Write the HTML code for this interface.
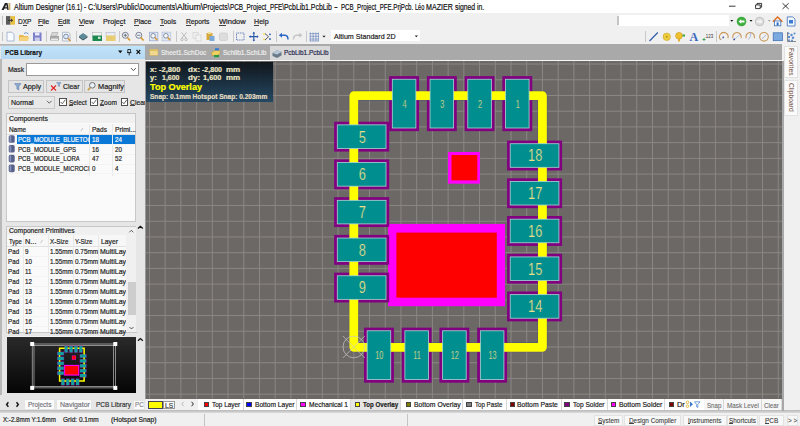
<!DOCTYPE html>
<html><head><meta charset="utf-8">
<style>
*{margin:0;padding:0;box-sizing:border-box}
html,body{width:800px;height:426px;overflow:hidden;background:#f0f0f0;font-family:"Liberation Sans",sans-serif;color:#1a1a1a}
.a{position:absolute}
.t{position:absolute;white-space:pre;transform-origin:0 0;line-height:1;-webkit-text-stroke:0.2px currentColor}
svg{overflow:visible}
</style></head><body>
<div class="a" style="left:0.00px;top:0.00px;width:800.00px;height:13.00px;background:#fff"></div>
<div class="t" style="left:13.90px;top:3.00px;font-size:8.4px;transform:scaleX(0.847);color:#111;">Altium Designer </div>
<div class="t" style="left:66.10px;top:3.00px;font-size:8.4px;transform:scaleX(0.745);color:#111;">(16.1) - </div>
<div class="t" style="left:88.00px;top:3.00px;font-size:8.4px;transform:scaleX(0.851);color:#111;">C:\Users\</div>
<div class="t" style="left:117.80px;top:3.00px;font-size:8.4px;transform:scaleX(0.869);color:#111;">Public\</div>
<div class="t" style="left:139.70px;top:3.00px;font-size:8.4px;transform:scaleX(0.832);color:#111;">Documents\</div>
<div class="t" style="left:177.00px;top:3.00px;font-size:8.4px;transform:scaleX(1.021);color:#111;">Altium\</div>
<div class="t" style="left:203.20px;top:3.00px;font-size:8.4px;transform:scaleX(0.814);color:#111;">Projects\</div>
<div class="t" style="left:229.80px;top:3.00px;font-size:8.4px;transform:scaleX(0.759);color:#111;">PCB_Project_PFE\</div>
<div class="t" style="left:284.00px;top:3.00px;font-size:8.4px;transform:scaleX(0.824);color:#111;">PcbLib1.PcbLib </div>
<div class="t" style="left:334.00px;top:3.00px;font-size:8.4px;transform:scaleX(1.345);color:#111;">- </div>
<div class="t" style="left:340.90px;top:3.00px;font-size:8.4px;transform:scaleX(0.735);color:#111;">PCB_Project_PFE.PrjPcb. </div>
<div class="t" style="left:415.00px;top:3.00px;font-size:8.4px;transform:scaleX(0.661);color:#111;">Léo </div>
<div class="t" style="left:425.80px;top:3.00px;font-size:8.4px;transform:scaleX(0.848);color:#111;">MAZIER </div>
<div class="t" style="left:454.70px;top:3.00px;font-size:8.4px;transform:scaleX(0.815);color:#111;">signed in.</div>
<svg class="a" style="left:0;top:0" width="800" height="426" viewBox="0 0 800 426"><path d="M1.5 10L5 3H7.5L9 10H7.4L7 8.5H4.6L3.8 10Z" fill="#222"/><path d="M5 7.3H6.8L6.3 4.6Z" fill="#fff"/><rect x="8.4" y="3" width="2" height="7" fill="#c8b078"/>
<path d="M729 6.2H735.5" stroke="#222" stroke-width="0.9"/>
<path d="M755.6 4.9H760.2V8.6H755.6Z M757 4.9V3.4H761.6V7.2H760.2" stroke="#222" stroke-width="0.9" fill="none"/>
<path d="M782.5 3.2L788.7 9M788.7 3.2L782.5 9" stroke="#222" stroke-width="0.9"/></svg>
<div class="a" style="left:0.00px;top:13.00px;width:800.00px;height:30.50px;background:#f0f0f0"></div>
<div class="a" style="left:1.90px;top:16.10px;width:1.50px;height:9.00px;background:#c4c4c4"></div>
<div class="a" style="left:1.90px;top:31.50px;width:1.50px;height:9.50px;background:#c4c4c4"></div>
<svg class="a" style="left:0;top:0" width="800" height="426" viewBox="0 0 800 426"><rect x="6" y="16.1" width="4.5" height="8.6" fill="#5a5a5a"/><rect x="10.5" y="16.1" width="4.5" height="8.6" fill="#e8c040"/><path d="M8 20.4H12.5M11 19L12.6 20.4L11 21.8" stroke="#333" stroke-width="1" fill="none"/></svg>
<div class="t" style="left:18.00px;top:18.00px;font-size:7.8px;transform:scaleX(0.841);color:#1a1a1a;">DXP</div>
<div class="a" style="left:22.74px;top:24.60px;width:4.38px;height:0.70px;background:#444"></div>
<div class="t" style="left:38.30px;top:18.00px;font-size:7.8px;transform:scaleX(0.893);color:#1a1a1a;">File</div>
<div class="a" style="left:38.30px;top:24.60px;width:4.25px;height:0.70px;background:#444"></div>
<div class="t" style="left:58.00px;top:18.00px;font-size:7.8px;transform:scaleX(0.886);color:#1a1a1a;">Edit</div>
<div class="a" style="left:58.00px;top:24.60px;width:4.61px;height:0.70px;background:#444"></div>
<div class="t" style="left:79.00px;top:18.00px;font-size:7.8px;transform:scaleX(0.888);color:#1a1a1a;">View</div>
<div class="a" style="left:79.00px;top:24.60px;width:4.62px;height:0.70px;background:#444"></div>
<div class="t" style="left:103.00px;top:18.00px;font-size:7.8px;transform:scaleX(0.924);color:#1a1a1a;">Project</div>
<div class="a" style="left:119.83px;top:24.60px;width:3.60px;height:0.70px;background:#444"></div>
<div class="t" style="left:134.00px;top:18.00px;font-size:7.8px;transform:scaleX(0.893);color:#1a1a1a;">Place</div>
<div class="a" style="left:134.00px;top:24.60px;width:4.64px;height:0.70px;background:#444"></div>
<div class="t" style="left:160.00px;top:18.00px;font-size:7.8px;transform:scaleX(0.887);color:#1a1a1a;">Tools</div>
<div class="a" style="left:160.00px;top:24.60px;width:4.23px;height:0.70px;background:#444"></div>
<div class="t" style="left:186.00px;top:18.00px;font-size:7.8px;transform:scaleX(0.857);color:#1a1a1a;">Reports</div>
<div class="a" style="left:186.00px;top:24.60px;width:4.83px;height:0.70px;background:#444"></div>
<div class="t" style="left:218.70px;top:18.00px;font-size:7.8px;transform:scaleX(0.964);color:#1a1a1a;">Window</div>
<div class="a" style="left:218.70px;top:24.60px;width:7.10px;height:0.70px;background:#444"></div>
<div class="t" style="left:253.80px;top:18.00px;font-size:7.8px;transform:scaleX(0.912);color:#1a1a1a;">Help</div>
<div class="a" style="left:253.80px;top:24.60px;width:5.14px;height:0.70px;background:#444"></div>
<div class="a" style="left:617.20px;top:15.80px;width:1.50px;height:9.40px;background:#c4c4c4"></div>
<div class="a" style="left:619.30px;top:14.70px;width:109.70px;height:11.10px;background:#fff"></div>
<svg class="a" style="left:0;top:0" width="800" height="426" viewBox="0 0 800 426"><path d="M730.3 20H733.3L731.8 21.8Z" fill="#111"/>
<circle cx="741.5" cy="21.5" r="4.8" fill="#3fae3f"/><path d="M738.6 21.5L741.2 19.2V20.6H744.5V22.4H741.2V23.8Z" fill="#fff"/>
<path d="M749.5 20H752.5L751 21.8Z" fill="#111"/>
<circle cx="759.6" cy="21.5" r="4.8" fill="#c8c8c8"/><circle cx="759.6" cy="21.5" r="3.6" fill="#dcdcdc"/><path d="M762.4 21.5L759.8 19.2V20.6H756.6V22.4H759.8V23.8Z" fill="#f4f4f4"/>
<path d="M767.8 20H770.6L769.2 21.6Z" fill="#999"/>
<path d="M772.9 21.8L777.6 17L782.4 21.8" stroke="#e06a20" stroke-width="1.4" fill="none"/><rect x="774.4" y="21" width="6.4" height="4.8" fill="#fff" stroke="#3a70b8" stroke-width="0.8"/><rect x="776.6" y="22.4" width="2" height="3" fill="#2a68c8"/>
<path d="M787.3 16.9H792.7L795 19.2V26H787.3Z" fill="#f4f8ff" stroke="#3a6cc0" stroke-width="0.8"/><rect x="789" y="20" width="4" height="3.5" fill="#3a7ad0"/></svg>
<div class="a" style="left:46.00px;top:31.00px;width:0.90px;height:11.00px;background:#c8c8c8"></div>
<div class="a" style="left:76.30px;top:31.00px;width:0.90px;height:11.00px;background:#c8c8c8"></div>
<div class="a" style="left:119.00px;top:31.00px;width:0.90px;height:11.00px;background:#c8c8c8"></div>
<div class="a" style="left:175.60px;top:31.00px;width:0.90px;height:11.00px;background:#c8c8c8"></div>
<div class="a" style="left:232.60px;top:31.00px;width:0.90px;height:11.00px;background:#c8c8c8"></div>
<div class="a" style="left:275.60px;top:31.00px;width:0.90px;height:11.00px;background:#c8c8c8"></div>
<div class="a" style="left:305.60px;top:31.00px;width:0.90px;height:11.00px;background:#c8c8c8"></div>
<div class="a" style="left:645.35px;top:31.00px;width:0.90px;height:11.00px;background:#c8c8c8"></div>
<div class="a" style="left:715.60px;top:31.00px;width:0.90px;height:11.00px;background:#c8c8c8"></div>
<svg class="a" style="left:0;top:0" width="800" height="426" viewBox="0 0 800 426"><path d="M7 32.2H12L14 34.2V41H7Z" fill="#f8fbff" stroke="#8aa0c0" stroke-width="0.7"/><path d="M19 35H23L24 36H28V40.8H19Z" fill="#e8b850"/><path d="M20 37H29.5L28 40.8H19Z" fill="#f6d27a"/><path d="M24 33.5Q26.5 31.5 28.5 34" stroke="#4a80c0" stroke-width="0.8" fill="none"/><rect x="33" y="32.5" width="8.5" height="8.5" fill="#7a7ec8"/><rect x="35" y="32.5" width="4.5" height="3" fill="#e8e8f8"/><rect x="34.8" y="37.5" width="5" height="3.5" fill="#c8cce8"/><path d="M50 36H59V40.5H50Z" fill="#a8a8a8"/><path d="M52 32.5H58L56.5 36H51Z" fill="#d8d8d8" stroke="#999" stroke-width="0.5"/><rect x="51" y="38.5" width="7" height="1.5" fill="#e8e8e8"/><path d="M62.5 32.3H68.5L70 34V41H62.5Z" fill="#f4f6fa" stroke="#8a98b0" stroke-width="0.6"/><circle cx="66" cy="36.5" r="2.4" fill="#dbe8f8" stroke="#6a7a98" stroke-width="0.8"/><path d="M67.8 38.3L70.5 41" stroke="#d09030" stroke-width="1.3"/><path d="M79 36L83 33L87.5 36L83 39Z" fill="#5a8a98"/><path d="M79 36V37.6L83 40.6L87.5 37.6V36L83 39Z" fill="#3a5a68"/><rect x="92.5" y="32.5" width="9" height="5" fill="#f4f4f4" stroke="#aaa" stroke-width="0.5"/><rect x="92.5" y="35.5" width="9.5" height="5.5" fill="#1e8a50"/><rect x="98" y="36.8" width="2.5" height="2" fill="#e0f0e0"/><rect x="106" y="32.5" width="9" height="5" fill="#e8ecf4" stroke="#aab" stroke-width="0.5"/><rect x="106" y="35.5" width="9.5" height="5.5" fill="#e8cc70"/><circle cx="125.3" cy="35.3" r="3" fill="#eaf2fb" stroke="#667" stroke-width="0.8"/><path d="M127.3 37.5L130.1 40.5" stroke="#d8962a" stroke-width="1.6"/><path d="M123.7 35.3H126.9" stroke="#333" stroke-width="0.6"/><path d="M125.3 33.7V36.9" stroke="#333" stroke-width="0.6"/><circle cx="138.8" cy="35.3" r="3" fill="#eaf2fb" stroke="#667" stroke-width="0.8"/><path d="M140.8 37.5L143.6 40.5" stroke="#d8962a" stroke-width="1.6"/><path d="M137.2 35.3H140.4" stroke="#333" stroke-width="0.6"/><rect x="149.29999999999998" y="32.2" width="8.6" height="8.6" fill="#dde8f6" stroke="#8a9ac8" stroke-width="0.6" /><circle cx="153.1" cy="35.8" r="2.3" fill="#f4f8fc" stroke="#667" stroke-width="0.7"/><path d="M154.79999999999998 37.5L157.2 40" stroke="#d8962a" stroke-width="1.4"/><rect x="162.1" y="32.2" width="8.6" height="8.6" fill="#dde8f6" stroke="#8a9ac8" stroke-width="0.6" stroke-dasharray="1 0.6"/><circle cx="165.9" cy="35.8" r="2.3" fill="#f4f8fc" stroke="#667" stroke-width="0.7"/><path d="M167.6 37.5L170.0 40" stroke="#d8962a" stroke-width="1.4"/><path d="M181.5 32.5L186.5 38.5M186.5 32.5L181.5 38.5" stroke="#aaa" stroke-width="0.8"/><circle cx="182" cy="39.5" r="1.2" fill="none" stroke="#aaa" stroke-width="0.7"/><circle cx="186" cy="39.5" r="1.2" fill="none" stroke="#aaa" stroke-width="0.7"/><rect x="193" y="32.5" width="5" height="6" fill="#eee" stroke="#ccc" stroke-width="0.6"/><rect x="196" y="35" width="5" height="6" fill="#f2f2f2" stroke="#ccc" stroke-width="0.6"/><rect x="206.5" y="33" width="6" height="7" fill="#d8a838"/><rect x="208" y="32" width="3" height="2" fill="#f0e0a0"/><rect x="209.5" y="36" width="5" height="5" fill="#7aa8d8"/><rect x="219.5" y="33" width="8" height="7.5" rx="1.5" fill="#ddd" stroke="#c8c8c8" stroke-width="0.6"/><rect x="236.5" y="33" width="7.5" height="7" fill="none" stroke="#3a5aa8" stroke-width="0.8" stroke-dasharray="1 0.7"/><path d="M253.8 32.3V41M249.5 36.6H258" stroke="#2a58a8" stroke-width="1.1"/><path d="M253.8 31.8L252.5 33.4H255.1ZM253.8 41.4L252.5 39.8H255.1ZM249 36.6L250.6 35.3V37.9ZM258.6 36.6L257 35.3V37.9Z" fill="#2a58a8"/><circle cx="264" cy="34" r="1" fill="#f0e060"/><circle cx="264" cy="39.5" r="1" fill="#f0e060"/><path d="M265 33.5L268.5 36.7L265 40" stroke="#333" stroke-width="0.8" fill="none"/><circle cx="270" cy="34.3" r="0.9" fill="#2a58a8"/><circle cx="270" cy="39" r="0.9" fill="#2a58a8"/><path d="M279.7 35.3H285Q288 35.5 288 39.5" stroke="#2a68c8" stroke-width="1.5" fill="none"/><path d="M279 35.3L282 32.8V37.8Z" fill="#2a68c8"/><path d="M301.5 35.3H296.5Q293.5 35.5 293.5 39.5" stroke="#c4c4c4" stroke-width="1.4" fill="none"/><path d="M302.3 35.3L299.3 32.8V37.8Z" fill="#c4c4c4"/><g stroke="#5a78b8" stroke-width="0.6"><path d="M310.3 32.5V41M313.1 32.5V41M315.9 32.5V41M318.4 32.5V41M309.5 33.6H319M309.5 36.3H319M309.5 39H319M309.5 41H319"/></g><path d="M322.5 35.8H325.5L324 37.6Z" fill="#111"/></svg>
<div class="a" style="left:331.00px;top:30.00px;width:89.00px;height:11.20px;background:#fff"></div>
<div class="t" style="left:333.50px;top:33.00px;font-size:7.8px;transform:scaleX(0.913);color:#222;">Altium Standard 2D</div>
<svg class="a" style="left:0;top:0" width="800" height="426" viewBox="0 0 800 426"><path d="M414.8 35.5H417.8L416.3 37.3Z" fill="#111"/></svg>
<svg class="a" style="left:0;top:0" width="800" height="426" viewBox="0 0 800 426"><path d="M649.5 41L657.8 32.5" stroke="#2a58a8" stroke-width="1.1"/><circle cx="666.75" cy="36.8" r="3.7" fill="#f0d040" stroke="#c8a020" stroke-width="0.6"/><circle cx="666.75" cy="36.8" r="1.2" fill="#c8a020"/><circle cx="679" cy="35.8" r="3.4" fill="#f0c030" stroke="#c89a20" stroke-width="0.6"/><rect x="678" y="38.5" width="2" height="3" fill="#e0b030"/><rect x="682.5" y="34.5" width="2.5" height="2" fill="#3aa040"/><text x="693.75" y="41" font-family="Liberation Serif" font-weight="bold" font-size="12" fill="#3a68c0" text-anchor="middle">A</text><text x="709" y="38" font-family="Liberation Sans" font-size="4.5" fill="#333" text-anchor="middle">.123</text><path d="M702.5 39.5H705.5M704 38V41" stroke="#2a9a40" stroke-width="0.8"/><path d="M720.76 39.84A4.3 4.3 0 1 1 727.84 38.27" stroke="#c89858" stroke-width="1.1" fill="none"/><circle cx="723.3" cy="37.3" r="0.9" fill="#2a4a98"/><path d="M723.3 37.3L720.6 40" stroke="#8aa0d8" stroke-width="0.5"/><path d="M732.96 38.27A4.3 4.3 0 1 1 741.04 38.27" stroke="#c89858" stroke-width="1.1" fill="none"/><path d="M740 34.5L734.2 39.4" stroke="#8aa0d8" stroke-width="0.6"/><circle cx="734.2" cy="39.4" r="0.9" fill="#2a4a98"/><path d="M746.16 38.27A4.3 4.3 0 1 1 754.24 38.27" stroke="#c89858" stroke-width="1.1" fill="none"/><path d="M750.6 32.5V36L748.5 39.5" stroke="#8aa0d8" stroke-width="0.7" fill="none"/><circle cx="764" cy="36.8" r="4.3" fill="none" stroke="#c89858" stroke-width="1.1"/><path d="M762 39L766 34.8" stroke="#8aa0d8" stroke-width="0.7"/><rect x="773.2" y="32.8" width="9.2" height="7.9" fill="#7aaae0" stroke="#3a68b0" stroke-width="0.7"/><g fill="#5a8ad0"><circle cx="788.5" cy="33.5" r="1"/><circle cx="791.5" cy="35" r="1.2"/><circle cx="794.5" cy="33.5" r="1"/><circle cx="789" cy="37" r="1.2"/><circle cx="793" cy="37.8" r="1.2"/><circle cx="789" cy="40.2" r="1"/><circle cx="792" cy="40.5" r="1"/></g><path d="M787.5 32V41.5H796" stroke="#444" stroke-width="0.6" fill="none"/></svg>
<div class="a" style="left:0.00px;top:43.50px;width:145.00px;height:367.00px;background:#e6e6e6"></div>
<div class="a" style="left:0.00px;top:43.50px;width:145.00px;height:2.20px;background:linear-gradient(#acacac,#cacaca)"></div>
<div class="a" style="left:1.00px;top:45.70px;width:144.00px;height:13.30px;background:linear-gradient(#c0e4fa,#b6d8f2)"></div>
<div class="t" style="left:4.70px;top:49.00px;font-size:7.8px;transform:scaleX(0.820);color:#111;font-weight:bold;">PCB Library</div>
<svg class="a" style="left:0;top:0" width="800" height="426" viewBox="0 0 800 426"><path d="M118 50.6H122.5L120.25 53.2Z" fill="#111"/>
<path d="M127.8 49.5H130.6V52.6H127.8Z M127 52.6H131.4 M129.2 52.6V55.4" stroke="#222" stroke-width="0.9" fill="none"/>
<path d="M136.5 50L140.2 53.8M140.2 50L136.5 53.8" stroke="#111" stroke-width="1.1"/></svg>
<div class="a" style="left:0.00px;top:59.00px;width:2.00px;height:336.00px;background:#b8b8b8"></div>
<div class="t" style="left:7.60px;top:66.00px;font-size:7.8px;transform:scaleX(0.864);color:#222;">Mask</div>
<div class="a" style="left:25.50px;top:63.30px;width:113.50px;height:12.30px;background:#fff;border:1px solid #9a9a9a"></div>
<svg class="a" style="left:0;top:0" width="800" height="426" viewBox="0 0 800 426"><path d="M131 68.1L133.4 70.6L135.8 68.1" stroke="#555" stroke-width="1" fill="none"/></svg>
<div class="a" style="left:8.40px;top:80.00px;width:36.10px;height:13.00px;background:#e4e4e4;border:1px solid #c4c4c4"></div>
<div class="a" style="left:46.00px;top:80.00px;width:36.50px;height:13.00px;background:#e4e4e4;border:1px solid #c4c4c4"></div>
<div class="a" style="left:84.00px;top:80.00px;width:41.00px;height:13.00px;background:#e4e4e4;border:1px solid #c4c4c4"></div>
<div class="t" style="left:23.30px;top:83.00px;font-size:7.8px;transform:scaleX(0.929);color:#222;">Apply</div>
<div class="t" style="left:63.00px;top:83.00px;font-size:7.8px;transform:scaleX(0.881);color:#222;">Clear</div>
<div class="t" style="left:97.50px;top:83.00px;font-size:7.8px;transform:scaleX(0.950);color:#222;">Magnify</div>
<svg class="a" style="left:0;top:0" width="800" height="426" viewBox="0 0 800 426"><path d="M14.5 83.5H21L18.8 86.6V90L16.9 89V86.6Z" fill="#8aa8d0" stroke="#5a78a8" stroke-width="0.5"/>
<path d="M51 85.5L56 90.5M56 85.5L51 90.5" stroke="#e02020" stroke-width="1.1"/><path d="M56.5 82.5H61L59.5 84.6V86.6L58.2 86V84.6Z" fill="#8aa8d0" stroke="#5a78a8" stroke-width="0.4"/>
<circle cx="92.3" cy="85.3" r="2.8" fill="#e8f0f8" stroke="#555" stroke-width="0.8"/><path d="M90.4 87.4L87.8 90.2" stroke="#c89a40" stroke-width="1.5"/></svg>
<div class="a" style="left:8.40px;top:96.00px;width:46.60px;height:12.50px;background:#e8e8e8;border:1px solid #c8c8c8"></div>
<div class="t" style="left:10.80px;top:99.00px;font-size:7.8px;transform:scaleX(0.900);color:#222;">Normal</div>
<svg class="a" style="left:0;top:0" width="800" height="426" viewBox="0 0 800 426"><path d="M47 100.8L49.3 103.2L51.6 100.8" stroke="#555" stroke-width="0.9" fill="none"/></svg>
<div class="a" style="left:59.00px;top:98.40px;width:7.80px;height:7.50px;background:#fff;border:0.9px solid #505050"></div>
<svg class="a" style="left:0;top:0" width="800" height="426" viewBox="0 0 800 426"><path d="M60.6 101.9L62.3 103.8L65.4 99.6" stroke="#444" stroke-width="0.8" fill="none"/></svg>
<div class="t" style="left:68.50px;top:99.00px;font-size:7.8px;transform:scaleX(0.825);color:#222;">Select</div>
<div class="a" style="left:68.50px;top:105.30px;width:4.29px;height:0.70px;background:#444"></div>
<div class="a" style="left:90.00px;top:98.40px;width:7.80px;height:7.50px;background:#fff;border:0.9px solid #505050"></div>
<svg class="a" style="left:0;top:0" width="800" height="426" viewBox="0 0 800 426"><path d="M91.6 101.9L93.3 103.8L96.4 99.6" stroke="#444" stroke-width="0.8" fill="none"/></svg>
<div class="t" style="left:99.50px;top:99.00px;font-size:7.8px;transform:scaleX(0.847);color:#222;">Zoom</div>
<div class="a" style="left:99.50px;top:105.30px;width:4.04px;height:0.70px;background:#444"></div>
<div class="a" style="left:120.60px;top:98.40px;width:7.80px;height:7.50px;background:#fff;border:0.9px solid #505050"></div>
<svg class="a" style="left:0;top:0" width="800" height="426" viewBox="0 0 800 426"><path d="M122.19999999999999 101.9L123.89999999999999 103.8L127.0 99.6" stroke="#444" stroke-width="0.8" fill="none"/></svg>
<div class="t" style="left:130.10px;top:99.00px;font-size:7.8px;transform:scaleX(0.875);color:#222;">Clear</div>
<div class="a" style="left:130.10px;top:105.30px;width:4.93px;height:0.70px;background:#444"></div>
<div class="a" style="left:6.40px;top:113.40px;width:129.60px;height:108.30px;background:#fafafa;border:1px solid #c8c8c8"></div>
<div class="a" style="left:7.40px;top:114.40px;width:127.60px;height:9.10px;background:#f0f0f0"></div>
<div class="a" style="left:7.40px;top:123.50px;width:127.60px;height:0.80px;background:#dcdcdc"></div>
<div class="t" style="left:8.80px;top:115.00px;font-size:7.8px;transform:scaleX(0.880);color:#222;">Components</div>
<div class="a" style="left:7.40px;top:124.30px;width:127.60px;height:9.90px;background:#f7f7f7"></div>
<div class="a" style="left:7.40px;top:133.80px;width:127.60px;height:0.80px;background:#e0e0e0"></div>
<div class="a" style="left:89.40px;top:124.30px;width:0.80px;height:51.70px;background:#e8e8e8"></div>
<div class="a" style="left:111.80px;top:124.30px;width:0.80px;height:51.70px;background:#e8e8e8"></div>
<div class="t" style="left:8.80px;top:126.00px;font-size:7.8px;transform:scaleX(0.821);color:#222;">Name</div>
<div class="t" style="left:91.50px;top:126.00px;font-size:7.8px;transform:scaleX(0.838);color:#222;">Pads</div>
<div class="t" style="left:114.50px;top:126.00px;font-size:7.8px;transform:scaleX(0.861);color:#222;">Primi...</div>
<svg class="a" style="left:0;top:0" width="800" height="426" viewBox="0 0 800 426"><path d="M80.8 131.2L82.8 128" stroke="#999" stroke-width="0.5"/></svg>
<div class="a" style="left:16.90px;top:135.20px;width:118.60px;height:8.60px;background:#0a78d7"></div>
<div class="t" style="left:17.60px;top:136.00px;font-size:7.8px;transform:scaleX(0.780);color:#fff;max-width:92px;overflow:hidden">PCB_MODULE_BLUETOC</div>
<div class="t" style="left:91.50px;top:136.00px;font-size:7.8px;transform:scaleX(0.800);color:#fff;">18</div>
<div class="t" style="left:114.50px;top:136.00px;font-size:7.8px;transform:scaleX(0.800);color:#fff;">24</div>
<div class="a" style="left:7.40px;top:144.00px;width:127.60px;height:0.70px;background:#f3f3f3"></div>
<svg class="a" style="left:0;top:0" width="800" height="426" viewBox="0 0 800 426"><rect x="8.7" y="135.20000000000002" width="6" height="7.6" rx="1.6" fill="#56608a"/><rect x="9.6" y="135.8" width="1.6" height="6.2" fill="#8a94b8"/></svg>
<div class="t" style="left:17.60px;top:146.00px;font-size:7.8px;transform:scaleX(0.780);color:#222;max-width:92px;overflow:hidden">PCB_MODULE_GPS</div>
<div class="t" style="left:91.50px;top:146.00px;font-size:7.8px;transform:scaleX(0.800);color:#222;">16</div>
<div class="t" style="left:114.50px;top:146.00px;font-size:7.8px;transform:scaleX(0.800);color:#222;">20</div>
<div class="a" style="left:7.40px;top:153.80px;width:127.60px;height:0.70px;background:#f3f3f3"></div>
<svg class="a" style="left:0;top:0" width="800" height="426" viewBox="0 0 800 426"><rect x="8.7" y="145.00000000000003" width="6" height="7.6" rx="1.6" fill="#56608a"/><rect x="9.6" y="145.60000000000002" width="1.6" height="6.2" fill="#8a94b8"/></svg>
<div class="t" style="left:17.60px;top:155.00px;font-size:7.8px;transform:scaleX(0.780);color:#222;max-width:92px;overflow:hidden">PCB_MODULE_LORA</div>
<div class="t" style="left:91.50px;top:155.00px;font-size:7.8px;transform:scaleX(0.800);color:#222;">47</div>
<div class="t" style="left:114.50px;top:155.00px;font-size:7.8px;transform:scaleX(0.800);color:#222;">52</div>
<div class="a" style="left:7.40px;top:163.60px;width:127.60px;height:0.70px;background:#f3f3f3"></div>
<svg class="a" style="left:0;top:0" width="800" height="426" viewBox="0 0 800 426"><rect x="8.7" y="154.8" width="6" height="7.6" rx="1.6" fill="#56608a"/><rect x="9.6" y="155.4" width="1.6" height="6.2" fill="#8a94b8"/></svg>
<div class="t" style="left:17.60px;top:165.00px;font-size:7.8px;transform:scaleX(0.780);color:#222;max-width:92px;overflow:hidden">PCB_MODULE_MICROCI</div>
<div class="t" style="left:91.50px;top:165.00px;font-size:7.8px;transform:scaleX(0.800);color:#222;">0</div>
<div class="t" style="left:114.50px;top:165.00px;font-size:7.8px;transform:scaleX(0.800);color:#222;">4</div>
<div class="a" style="left:7.40px;top:173.40px;width:127.60px;height:0.70px;background:#f3f3f3"></div>
<svg class="a" style="left:0;top:0" width="800" height="426" viewBox="0 0 800 426"><rect x="8.7" y="164.60000000000002" width="6" height="7.6" rx="1.6" fill="#56608a"/><rect x="9.6" y="165.20000000000002" width="1.6" height="6.2" fill="#8a94b8"/></svg>
<div class="a" style="left:89.40px;top:134.60px;width:46.10px;height:9.20px;background:#0a78d7"></div>
<div class="a" style="left:89.40px;top:134.60px;width:0.80px;height:9.20px;background:#e0ecf8"></div>
<div class="a" style="left:111.80px;top:134.60px;width:0.80px;height:9.20px;background:#e0ecf8"></div>
<div class="t" style="left:91.50px;top:136.00px;font-size:7.8px;transform:scaleX(0.800);color:#fff;">18</div>
<div class="t" style="left:114.50px;top:136.00px;font-size:7.8px;transform:scaleX(0.800);color:#fff;">24</div>
<div class="a" style="left:6.40px;top:225.70px;width:130.10px;height:107.00px;background:#fafafa;border:1px solid #c8c8c8"></div>
<div class="a" style="left:7.40px;top:226.70px;width:118.60px;height:8.70px;background:#f0f0f0"></div>
<div class="t" style="left:8.80px;top:227.00px;font-size:7.8px;transform:scaleX(0.860);color:#222;">Component Primitives</div>
<div class="a" style="left:7.40px;top:235.40px;width:118.60px;height:10.90px;background:#f7f7f7"></div>
<div class="a" style="left:7.40px;top:245.90px;width:118.60px;height:0.80px;background:#e0e0e0"></div>
<div class="a" style="left:23.00px;top:235.40px;width:0.80px;height:96.60px;background:#e8e8e8"></div>
<div class="a" style="left:48.00px;top:235.40px;width:0.80px;height:96.60px;background:#e8e8e8"></div>
<div class="a" style="left:72.80px;top:235.40px;width:0.80px;height:96.60px;background:#e8e8e8"></div>
<div class="a" style="left:97.80px;top:235.40px;width:0.80px;height:96.60px;background:#e8e8e8"></div>
<div class="t" style="left:8.80px;top:238.00px;font-size:7.8px;transform:scaleX(0.759);color:#222;">Type</div>
<div class="t" style="left:25.00px;top:238.00px;font-size:7.8px;transform:scaleX(0.943);color:#222;">N...</div>
<svg class="a" style="left:0;top:0" width="800" height="426" viewBox="0 0 800 426"><path d="M40.5 243.2L42.5 240" stroke="#999" stroke-width="0.5"/></svg>
<div class="t" style="left:50.00px;top:238.00px;font-size:7.8px;transform:scaleX(0.800);color:#222;">X-Size</div>
<div class="t" style="left:75.00px;top:238.00px;font-size:7.8px;transform:scaleX(0.778);color:#222;">Y-Size</div>
<div class="t" style="left:100.50px;top:238.00px;font-size:7.8px;transform:scaleX(0.866);color:#222;">Layer</div>
<div class="t" style="left:8.20px;top:248.00px;font-size:7.8px;transform:scaleX(0.800);color:#222;">Pad</div>
<div class="t" style="left:24.60px;top:248.00px;font-size:7.8px;transform:scaleX(0.800);color:#222;">9</div>
<div class="t" style="left:50.00px;top:248.00px;font-size:7.8px;transform:scaleX(0.812);color:#222;">1.55mm</div>
<div class="t" style="left:74.70px;top:248.00px;font-size:7.8px;transform:scaleX(0.823);color:#222;">0.75mm</div>
<div class="t" style="left:100.00px;top:248.00px;font-size:7.8px;transform:scaleX(0.896);color:#222;">MultiLay</div>
<div class="a" style="left:7.40px;top:256.30px;width:118.60px;height:0.70px;background:#f3f3f3"></div>
<div class="t" style="left:8.20px;top:258.00px;font-size:7.8px;transform:scaleX(0.800);color:#222;">Pad</div>
<div class="t" style="left:24.60px;top:258.00px;font-size:7.8px;transform:scaleX(0.800);color:#222;">10</div>
<div class="t" style="left:50.00px;top:258.00px;font-size:7.8px;transform:scaleX(0.812);color:#222;">1.55mm</div>
<div class="t" style="left:74.70px;top:258.00px;font-size:7.8px;transform:scaleX(0.823);color:#222;">0.75mm</div>
<div class="t" style="left:100.00px;top:258.00px;font-size:7.8px;transform:scaleX(0.896);color:#222;">MultiLay</div>
<div class="a" style="left:7.40px;top:266.27px;width:118.60px;height:0.70px;background:#f3f3f3"></div>
<div class="t" style="left:8.20px;top:268.00px;font-size:7.8px;transform:scaleX(0.800);color:#222;">Pad</div>
<div class="t" style="left:24.60px;top:268.00px;font-size:7.8px;transform:scaleX(0.800);color:#222;">11</div>
<div class="t" style="left:50.00px;top:268.00px;font-size:7.8px;transform:scaleX(0.812);color:#222;">1.55mm</div>
<div class="t" style="left:74.70px;top:268.00px;font-size:7.8px;transform:scaleX(0.823);color:#222;">0.75mm</div>
<div class="t" style="left:100.00px;top:268.00px;font-size:7.8px;transform:scaleX(0.896);color:#222;">MultiLay</div>
<div class="a" style="left:7.40px;top:276.24px;width:118.60px;height:0.70px;background:#f3f3f3"></div>
<div class="t" style="left:8.20px;top:278.00px;font-size:7.8px;transform:scaleX(0.800);color:#222;">Pad</div>
<div class="t" style="left:24.60px;top:278.00px;font-size:7.8px;transform:scaleX(0.800);color:#222;">12</div>
<div class="t" style="left:50.00px;top:278.00px;font-size:7.8px;transform:scaleX(0.812);color:#222;">1.55mm</div>
<div class="t" style="left:74.70px;top:278.00px;font-size:7.8px;transform:scaleX(0.823);color:#222;">0.75mm</div>
<div class="t" style="left:100.00px;top:278.00px;font-size:7.8px;transform:scaleX(0.896);color:#222;">MultiLay</div>
<div class="a" style="left:7.40px;top:286.21px;width:118.60px;height:0.70px;background:#f3f3f3"></div>
<div class="t" style="left:8.20px;top:288.00px;font-size:7.8px;transform:scaleX(0.800);color:#222;">Pad</div>
<div class="t" style="left:24.60px;top:288.00px;font-size:7.8px;transform:scaleX(0.800);color:#222;">13</div>
<div class="t" style="left:50.00px;top:288.00px;font-size:7.8px;transform:scaleX(0.812);color:#222;">1.55mm</div>
<div class="t" style="left:74.70px;top:288.00px;font-size:7.8px;transform:scaleX(0.823);color:#222;">0.75mm</div>
<div class="t" style="left:100.00px;top:288.00px;font-size:7.8px;transform:scaleX(0.896);color:#222;">MultiLay</div>
<div class="a" style="left:7.40px;top:296.18px;width:118.60px;height:0.70px;background:#f3f3f3"></div>
<div class="t" style="left:8.20px;top:298.00px;font-size:7.8px;transform:scaleX(0.800);color:#222;">Pad</div>
<div class="t" style="left:24.60px;top:298.00px;font-size:7.8px;transform:scaleX(0.800);color:#222;">14</div>
<div class="t" style="left:50.00px;top:298.00px;font-size:7.8px;transform:scaleX(0.812);color:#222;">1.55mm</div>
<div class="t" style="left:74.70px;top:298.00px;font-size:7.8px;transform:scaleX(0.823);color:#222;">0.75mm</div>
<div class="t" style="left:100.00px;top:298.00px;font-size:7.8px;transform:scaleX(0.896);color:#222;">MultiLay</div>
<div class="a" style="left:7.40px;top:306.15px;width:118.60px;height:0.70px;background:#f3f3f3"></div>
<div class="t" style="left:8.20px;top:308.00px;font-size:7.8px;transform:scaleX(0.800);color:#222;">Pad</div>
<div class="t" style="left:24.60px;top:308.00px;font-size:7.8px;transform:scaleX(0.800);color:#222;">15</div>
<div class="t" style="left:50.00px;top:308.00px;font-size:7.8px;transform:scaleX(0.812);color:#222;">1.55mm</div>
<div class="t" style="left:74.70px;top:308.00px;font-size:7.8px;transform:scaleX(0.823);color:#222;">0.75mm</div>
<div class="t" style="left:100.00px;top:308.00px;font-size:7.8px;transform:scaleX(0.896);color:#222;">MultiLay</div>
<div class="a" style="left:7.40px;top:316.12px;width:118.60px;height:0.70px;background:#f3f3f3"></div>
<div class="t" style="left:8.20px;top:318.00px;font-size:7.8px;transform:scaleX(0.800);color:#222;">Pad</div>
<div class="t" style="left:24.60px;top:318.00px;font-size:7.8px;transform:scaleX(0.800);color:#222;">16</div>
<div class="t" style="left:50.00px;top:318.00px;font-size:7.8px;transform:scaleX(0.812);color:#222;">1.55mm</div>
<div class="t" style="left:74.70px;top:318.00px;font-size:7.8px;transform:scaleX(0.823);color:#222;">0.75mm</div>
<div class="t" style="left:100.00px;top:318.00px;font-size:7.8px;transform:scaleX(0.896);color:#222;">MultiLay</div>
<div class="a" style="left:7.40px;top:326.09px;width:118.60px;height:0.70px;background:#f3f3f3"></div>
<div class="t" style="left:8.20px;top:328.00px;font-size:7.8px;transform:scaleX(0.800);color:#222;">Pad</div>
<div class="t" style="left:24.60px;top:328.00px;font-size:7.8px;transform:scaleX(0.800);color:#222;">17</div>
<div class="t" style="left:50.00px;top:328.00px;font-size:7.8px;transform:scaleX(0.812);color:#222;">1.55mm</div>
<div class="t" style="left:74.70px;top:328.00px;font-size:7.8px;transform:scaleX(0.823);color:#222;">0.75mm</div>
<div class="t" style="left:100.00px;top:328.00px;font-size:7.8px;transform:scaleX(0.896);color:#222;">MultiLay</div>
<div class="a" style="left:7.40px;top:336.06px;width:118.60px;height:0.70px;background:#f3f3f3"></div>
<div class="a" style="left:126.00px;top:226.70px;width:9.50px;height:105.30px;background:#f0f0f0"></div>
<div class="a" style="left:127.50px;top:282.30px;width:8.00px;height:32.80px;background:#cdcdcd"></div>
<svg class="a" style="left:0;top:0" width="800" height="426" viewBox="0 0 800 426"><path d="M129.3 232.3L131.3 230.3L133.3 232.3" stroke="#333" stroke-width="0.8" fill="none"/>
<path d="M129.5 327L131.5 329L133.5 327" stroke="#333" stroke-width="0.8" fill="none"/>
<path d="M138 228.5L140.4 226.3L142.8 228.5" stroke="#111" stroke-width="1.3" fill="none"/>
<path d="M138 340.8L140.4 338.6L142.8 340.8" stroke="#111" stroke-width="1.3" fill="none"/></svg>
<div class="a" style="left:126.00px;top:332.00px;width:10.50px;height:0.70px;background:#c8c8c8"></div>
<div class="a" style="left:6.8px;top:337.4px;width:129.5px;height:56.1px;background:linear-gradient(#2a2a2a,#050505)"></div>
<svg class="a" style="left:0;top:0" width="800" height="426" viewBox="0 0 800 426"><g fill="none" stroke="#d8d8d8" stroke-width="0.6"><rect x="32.2" y="344" width="83.1" height="43.9"/><rect x="34" y="345.6" width="79.5" height="40.7"/></g>
<g fill="#fff"><rect x="30.2" y="342" width="4" height="4"/><rect x="113.3" y="342" width="4" height="4"/><rect x="30.2" y="385.9" width="4" height="4"/><rect x="113.3" y="385.9" width="4" height="4"/></g>
<g transform="translate(59.6 380.9) scale(0.13) translate(-353.8 -347)"><rect x="388" y="223.9" width="117" height="82.3" fill="#ff00ff"/><rect x="396.4" y="232.6" width="100.4" height="65.1" fill="#ff0000"/><rect x="448" y="152" width="31.9" height="31.7" fill="#ff00ff"/><rect x="451.5" y="155" width="25.8" height="25.4" fill="#ff0000"/><g fill="#800080"><rect x="502.35" y="76.13" width="29.87" height="55.02"/><rect x="464.63" y="76.13" width="29.87" height="55.02"/><rect x="426.90" y="76.13" width="29.87" height="55.02"/><rect x="389.17" y="76.13" width="29.87" height="55.02"/><rect x="334.15" y="121.72" width="55.02" height="29.87"/><rect x="334.15" y="159.45" width="55.02" height="29.87"/><rect x="334.15" y="197.17" width="55.02" height="29.87"/><rect x="334.15" y="234.90" width="55.02" height="29.87"/><rect x="334.15" y="272.63" width="55.02" height="29.87"/><rect x="364.02" y="327.65" width="29.87" height="55.02"/><rect x="401.75" y="327.65" width="29.87" height="55.02"/><rect x="439.47" y="327.65" width="29.87" height="55.02"/><rect x="477.20" y="327.65" width="29.87" height="55.02"/><rect x="507.07" y="291.49" width="55.02" height="29.87"/><rect x="507.07" y="253.77" width="55.02" height="29.87"/><rect x="507.07" y="216.04" width="55.02" height="29.87"/><rect x="507.07" y="178.31" width="55.02" height="29.87"/><rect x="507.07" y="140.58" width="55.02" height="29.87"/></g><path d="M353.80 347.30V95.68H542.44V347.30Z" stroke="#ffff00" stroke-width="11.5" fill="none"/><g fill="#10a0a0"><rect x="505.50" y="79.27" width="23.58" height="48.73"/><rect x="467.77" y="79.27" width="23.58" height="48.73"/><rect x="430.04" y="79.27" width="23.58" height="48.73"/><rect x="392.31" y="79.27" width="23.58" height="48.73"/><rect x="337.29" y="124.86" width="48.73" height="23.58"/><rect x="337.29" y="162.59" width="48.73" height="23.58"/><rect x="337.29" y="200.32" width="48.73" height="23.58"/><rect x="337.29" y="238.05" width="48.73" height="23.58"/><rect x="337.29" y="275.77" width="48.73" height="23.58"/><rect x="367.16" y="330.79" width="23.58" height="48.73"/><rect x="404.89" y="330.79" width="23.58" height="48.73"/><rect x="442.62" y="330.79" width="23.58" height="48.73"/><rect x="480.35" y="330.79" width="23.58" height="48.73"/><rect x="510.21" y="294.64" width="48.73" height="23.58"/><rect x="510.21" y="256.91" width="48.73" height="23.58"/><rect x="510.21" y="219.18" width="48.73" height="23.58"/><rect x="510.21" y="181.45" width="48.73" height="23.58"/><rect x="510.21" y="143.73" width="48.73" height="23.58"/></g></g></svg>
<div class="a" style="left:0.00px;top:395.00px;width:145.00px;height:15.50px;background:#e6e6e6"></div>
<svg class="a" style="left:0;top:0" width="800" height="426" viewBox="0 0 800 426"><path d="M8.4 402.3L6.6 404.5L8.4 406.7" stroke="#111" stroke-width="1.4" fill="none"/><path d="M16.5 402.3L18.3 404.5L16.5 406.7" stroke="#111" stroke-width="1.4" fill="none"/></svg>
<div class="a" style="left:24.30px;top:399.40px;width:30.40px;height:10.40px;background:#fbfbfb;border:0.5px solid #e4e4e4"></div>
<div class="a" style="left:55.90px;top:399.40px;width:36.00px;height:10.40px;background:#fbfbfb;border:0.5px solid #e4e4e4"></div>
<div class="a" style="left:132.80px;top:399.70px;width:11.90px;height:10.20px;background:#fbfbfb;border:0.5px solid #e4e4e4"></div>
<div class="t" style="left:28.00px;top:401.00px;font-size:7.8px;transform:scaleX(0.830);color:#777780;">Projects</div>
<div class="t" style="left:59.50px;top:401.00px;font-size:7.8px;transform:scaleX(0.896);color:#777780;">Navigator</div>
<div class="t" style="left:96.00px;top:401.00px;font-size:7.8px;transform:scaleX(0.830);color:#333;">PCB Library</div>
<div class="t" style="left:135.00px;top:401.00px;font-size:7.8px;transform:scaleX(0.800);color:#888890;">PC</div>
<div class="a" style="left:145.00px;top:43.50px;width:637.30px;height:16.50px;background:#a9a9a9"></div>
<div class="a" style="left:145.00px;top:60.00px;width:637.50px;height:1.00px;background:#f8f8f8"></div>
<div class="a" style="left:269.90px;top:46.20px;width:60.50px;height:13.80px;background:#d9d9d9"></div>
<svg class="a" style="left:0;top:0" width="800" height="426" viewBox="0 0 800 426"><rect x="149.8" y="49.5" width="8.2" height="6" fill="#f0d890" stroke="#c8a850" stroke-width="0.5"/><rect x="149.8" y="49.5" width="8.2" height="1.6" fill="#e0c060"/>
<path d="M211.5 52.5L215 50.5H220V54L217 55.5H212Z" fill="#f0d060" stroke="#a88830" stroke-width="0.4"/><rect x="215" y="48.2" width="4" height="2.2" fill="#3a7ad0"/><rect x="214" y="55" width="5" height="2.2" fill="#2a9a40"/>
<path d="M272.5 53L277 50.2L281.5 52V55.5L277 58L272.5 56Z" fill="#6a7a88"/><path d="M272.5 53L277 50.2L281.5 52L277 54.6Z" fill="#b8c8d8"/></svg>
<div class="t" style="left:160.60px;top:49.00px;font-size:7.8px;transform:scaleX(0.837);color:#efefef;">Sheet1.SchDoc</div>
<div class="t" style="left:223.00px;top:49.00px;font-size:7.8px;transform:scaleX(0.841);color:#efefef;">Schlib1.SchLib</div>
<div class="t" style="left:283.60px;top:49.00px;font-size:7.8px;transform:scaleX(0.821);color:#22224a;">PcbLib1.PcbLib</div>
<div class="a" style="left:145px;top:61px;width:637.5px;height:337.5px;overflow:hidden;background:#6c6866"><svg class="a" style="left:-145px;top:-61px" width="800" height="426" viewBox="0 0 800 426"><path d="M149.44 61V398.5M165.16 61V398.5M180.88 61V398.5M196.60 61V398.5M212.32 61V398.5M228.04 61V398.5M243.76 61V398.5M259.48 61V398.5M275.20 61V398.5M290.92 61V398.5M306.64 61V398.5M322.36 61V398.5M338.08 61V398.5M353.80 61V398.5M369.52 61V398.5M385.24 61V398.5M400.96 61V398.5M416.68 61V398.5M432.40 61V398.5M448.12 61V398.5M463.84 61V398.5M479.56 61V398.5M495.28 61V398.5M511.00 61V398.5M526.72 61V398.5M542.44 61V398.5M558.16 61V398.5M573.88 61V398.5M589.60 61V398.5M605.32 61V398.5M621.04 61V398.5M636.76 61V398.5M652.48 61V398.5M668.20 61V398.5M683.92 61V398.5M699.64 61V398.5M715.36 61V398.5M731.08 61V398.5M746.80 61V398.5M762.52 61V398.5M778.24 61V398.5M145 64.04H782M145 79.76H782M145 95.48H782M145 111.20H782M145 126.92H782M145 142.64H782M145 158.36H782M145 174.08H782M145 189.80H782M145 205.52H782M145 221.24H782M145 236.96H782M145 252.68H782M145 268.40H782M145 284.12H782M145 299.84H782M145 315.56H782M145 331.28H782M145 347.00H782M145 362.72H782M145 378.44H782M145 394.16H782" stroke="#8b8784" stroke-width="1" fill="none"/>
<rect x="388" y="223.9" width="117" height="82.3" fill="#ff00ff"/><rect x="396.4" y="232.6" width="100.4" height="65.1" fill="#ff0000"/><rect x="448" y="152" width="31.9" height="31.7" fill="#ff00ff"/><rect x="451.5" y="155" width="25.8" height="25.4" fill="#ff0000"/>
<g fill="#800080"><rect x="502.35" y="76.13" width="29.87" height="55.02"/><rect x="464.63" y="76.13" width="29.87" height="55.02"/><rect x="426.90" y="76.13" width="29.87" height="55.02"/><rect x="389.17" y="76.13" width="29.87" height="55.02"/><rect x="334.15" y="121.72" width="55.02" height="29.87"/><rect x="334.15" y="159.45" width="55.02" height="29.87"/><rect x="334.15" y="197.17" width="55.02" height="29.87"/><rect x="334.15" y="234.90" width="55.02" height="29.87"/><rect x="334.15" y="272.63" width="55.02" height="29.87"/><rect x="364.02" y="327.65" width="29.87" height="55.02"/><rect x="401.75" y="327.65" width="29.87" height="55.02"/><rect x="439.47" y="327.65" width="29.87" height="55.02"/><rect x="477.20" y="327.65" width="29.87" height="55.02"/><rect x="507.07" y="291.49" width="55.02" height="29.87"/><rect x="507.07" y="253.77" width="55.02" height="29.87"/><rect x="507.07" y="216.04" width="55.02" height="29.87"/><rect x="507.07" y="178.31" width="55.02" height="29.87"/><rect x="507.07" y="140.58" width="55.02" height="29.87"/></g>
<path d="M353.80 347.30V95.68H542.44V347.30Z" stroke="#4c4c78" stroke-width="10" fill="none" stroke-linejoin="round" opacity="0.55"/><path d="M353.80 347.30V95.68H542.44V347.30Z" stroke="#ffff00" stroke-width="8.8" fill="none" stroke-linejoin="round"/>
<g fill="#008e8e" stroke="#a8d8d4" stroke-width="0.8"><rect x="505.50" y="79.27" width="23.58" height="48.73"/><rect x="467.77" y="79.27" width="23.58" height="48.73"/><rect x="430.04" y="79.27" width="23.58" height="48.73"/><rect x="392.31" y="79.27" width="23.58" height="48.73"/><rect x="337.29" y="124.86" width="48.73" height="23.58"/><rect x="337.29" y="162.59" width="48.73" height="23.58"/><rect x="337.29" y="200.32" width="48.73" height="23.58"/><rect x="337.29" y="238.05" width="48.73" height="23.58"/><rect x="337.29" y="275.77" width="48.73" height="23.58"/><rect x="367.16" y="330.79" width="23.58" height="48.73"/><rect x="404.89" y="330.79" width="23.58" height="48.73"/><rect x="442.62" y="330.79" width="23.58" height="48.73"/><rect x="480.35" y="330.79" width="23.58" height="48.73"/><rect x="510.21" y="294.64" width="48.73" height="23.58"/><rect x="510.21" y="256.91" width="48.73" height="23.58"/><rect x="510.21" y="219.18" width="48.73" height="23.58"/><rect x="510.21" y="181.45" width="48.73" height="23.58"/><rect x="510.21" y="143.73" width="48.73" height="23.58"/></g>
<g fill="#ece08a" stroke="#008b8b" stroke-width="0.22" text-anchor="middle" font-family="Liberation Sans"><text x="517.29" y="107.54" font-size="10.6" transform="translate(517.69 0) scale(0.68 1) translate(-517.29 0)">1</text><text x="479.56" y="107.54" font-size="10.6" transform="translate(479.96 0) scale(0.68 1) translate(-479.56 0)">2</text><text x="441.83" y="107.54" font-size="10.6" transform="translate(442.23 0) scale(0.68 1) translate(-441.83 0)">3</text><text x="404.10" y="107.54" font-size="10.6" transform="translate(404.50 0) scale(0.68 1) translate(-404.10 0)">4</text><text x="361.66" y="142.55" font-size="15.6" transform="translate(362.26 0) scale(0.82 1) translate(-361.66 0)">5</text><text x="361.66" y="180.28" font-size="15.6" transform="translate(362.26 0) scale(0.82 1) translate(-361.66 0)">6</text><text x="361.66" y="218.01" font-size="15.6" transform="translate(362.26 0) scale(0.82 1) translate(-361.66 0)">7</text><text x="361.66" y="255.74" font-size="15.6" transform="translate(362.26 0) scale(0.82 1) translate(-361.66 0)">8</text><text x="361.66" y="293.46" font-size="15.6" transform="translate(362.26 0) scale(0.82 1) translate(-361.66 0)">9</text><text x="378.95" y="359.06" font-size="10.6" transform="translate(379.35 0) scale(0.68 1) translate(-378.95 0)">10</text><text x="416.68" y="359.06" font-size="10.6" transform="translate(417.08 0) scale(0.68 1) translate(-416.68 0)">11</text><text x="454.41" y="359.06" font-size="10.6" transform="translate(454.81 0) scale(0.68 1) translate(-454.41 0)">12</text><text x="492.14" y="359.06" font-size="10.6" transform="translate(492.54 0) scale(0.68 1) translate(-492.14 0)">13</text><text x="534.58" y="312.33" font-size="15.6" transform="translate(535.18 0) scale(0.82 1) translate(-534.58 0)">14</text><text x="534.58" y="274.60" font-size="15.6" transform="translate(535.18 0) scale(0.82 1) translate(-534.58 0)">15</text><text x="534.58" y="236.87" font-size="15.6" transform="translate(535.18 0) scale(0.82 1) translate(-534.58 0)">16</text><text x="534.58" y="199.14" font-size="15.6" transform="translate(535.18 0) scale(0.82 1) translate(-534.58 0)">17</text><text x="534.58" y="161.42" font-size="15.6" transform="translate(535.18 0) scale(0.82 1) translate(-534.58 0)">18</text></g>
<g stroke="#c8c8c8" stroke-width="0.7" fill="none"><circle cx="353.80" cy="347.00" r="10.8"/><path d="M342.80 358.00L364.80 336.00M342.80 336.00L364.80 358.00"/></g></svg></div>
<div class="a" style="left:145.00px;top:61.00px;width:1.20px;height:337.50px;background:#9a9a9a"></div>
<div class="a" style="left:146.2px;top:61.9px;width:126.7px;height:39.7px;background:linear-gradient(rgba(8,14,20,0.92),rgba(30,70,100,0.92));"></div>
<div class="t" style="left:149.50px;top:66.00px;font-size:7.6px;transform:scaleX(1.031);color:#ece4c4;font-weight:bold;">x:</div>
<div class="t" style="left:158.90px;top:66.00px;font-size:7.6px;transform:scaleX(0.996);color:#ece4c4;font-weight:bold;">-2,800</div>
<div class="t" style="left:187.60px;top:66.00px;font-size:7.6px;transform:scaleX(1.060);color:#ece4c4;font-weight:bold;">dx:</div>
<div class="t" style="left:202.00px;top:66.00px;font-size:7.6px;transform:scaleX(0.929);color:#ece4c4;font-weight:bold;">-2,800</div>
<div class="t" style="left:225.50px;top:66.00px;font-size:7.6px;transform:scaleX(1.049);color:#ece4c4;font-weight:bold;">mm</div>
<div class="t" style="left:149.50px;top:74.00px;font-size:7.6px;transform:scaleX(1.031);color:#ece4c4;font-weight:bold;">y:</div>
<div class="t" style="left:162.20px;top:74.00px;font-size:7.6px;transform:scaleX(0.921);color:#ece4c4;font-weight:bold;">1,600</div>
<div class="t" style="left:187.60px;top:74.00px;font-size:7.6px;transform:scaleX(1.060);color:#ece4c4;font-weight:bold;">dy:</div>
<div class="t" style="left:203.00px;top:74.00px;font-size:7.6px;transform:scaleX(0.970);color:#ece4c4;font-weight:bold;">1,600</div>
<div class="t" style="left:225.50px;top:74.00px;font-size:7.6px;transform:scaleX(1.049);color:#ece4c4;font-weight:bold;">mm</div>
<div class="t" style="left:150.30px;top:83.00px;font-size:8.6px;transform:scaleX(1.061);color:#ffff00;font-weight:bold;">Top Overlay</div>
<div class="t" style="left:149.80px;top:94.00px;font-size:6.6px;transform:scaleX(0.994);color:#e4dcc0;font-weight:bold;">Snap: 0.1mm Hotspot Snap: 0.203mm</div>
<div class="a" style="left:783.50px;top:43.50px;width:16.50px;height:367.00px;background:#f0f0f0"></div>
<div class="a" style="left:782.30px;top:61.00px;width:1.30px;height:349.50px;background:#a8a8a8"></div>
<div class="a" style="left:783.80px;top:45.70px;width:14.40px;height:32.30px;background:#fbfbfb;border:0.6px solid #e2e2e2"></div>
<div class="a" style="left:783.80px;top:80.00px;width:14.40px;height:35.50px;background:#fbfbfb;border:0.6px solid #e2e2e2"></div>
<div class="t" style="left:795.2px;top:48px;font-size:7.2px;transform:rotate(90deg) scaleX(0.93);transform-origin:0 0;color:#6a4a3a;-webkit-text-stroke:0">Favorites</div>
<div class="t" style="left:795.2px;top:83.2px;font-size:7.2px;transform:rotate(90deg) scaleX(0.93);transform-origin:0 0;color:#6a4a3a;-webkit-text-stroke:0">Clipboard</div>
<div class="a" style="left:145.00px;top:398.50px;width:638.50px;height:11.50px;background:#fff"></div>
<div class="a" style="left:145.00px;top:398.50px;width:53.00px;height:11.50px;background:#f0f0f0"></div>
<div class="a" style="left:148.20px;top:401.00px;width:15.10px;height:7.70px;background:#ffff00;border:0.7px solid #445"></div>
<div class="a" style="left:163.20px;top:401.20px;width:11.60px;height:7.50px;background:#fafafa;border:1px solid #999"></div>
<div class="t" style="left:165.30px;top:401.57px;font-size:7px;transform:scaleX(0.946);color:#444;">LS</div>
<svg class="a" style="left:0;top:0" width="800" height="426" viewBox="0 0 800 426"><path d="M183.6 401.8L181.8 404L183.6 406.2" stroke="#aaa" stroke-width="0.8" fill="none"/><path d="M191.6 401.8L193.4 404L191.6 406.2" stroke="#111" stroke-width="0.9" fill="none"/></svg>
<div class="a" style="left:349.50px;top:398.50px;width:51.00px;height:11.50px;background:#e4e4e4"></div>
<div class="a" style="left:203.70px;top:402.00px;width:5.30px;height:5.00px;background:#ff0000;border:0.5px solid #444"></div>
<div class="t" style="left:212.30px;top:401.00px;font-size:7.4px;transform:scaleX(0.870);color:#222;">Top Layer</div>
<div class="a" style="left:242.70px;top:399.00px;width:0.70px;height:11.00px;background:#d8d8d8"></div>
<div class="a" style="left:246.40px;top:402.00px;width:5.30px;height:5.00px;background:#0000ff;border:0.5px solid #444"></div>
<div class="t" style="left:254.90px;top:401.00px;font-size:7.4px;transform:scaleX(0.897);color:#222;">Bottom Layer</div>
<div class="a" style="left:295.90px;top:399.00px;width:0.70px;height:11.00px;background:#d8d8d8"></div>
<div class="a" style="left:300.40px;top:402.00px;width:5.30px;height:5.00px;background:#ff00ff;border:0.5px solid #444"></div>
<div class="t" style="left:309.00px;top:401.00px;font-size:7.4px;transform:scaleX(0.897);color:#222;">Mechanical 1</div>
<div class="a" style="left:349.50px;top:399.00px;width:0.70px;height:11.00px;background:#d8d8d8"></div>
<div class="a" style="left:354.50px;top:402.00px;width:5.30px;height:5.00px;background:#ffff00;border:0.5px solid #444"></div>
<div class="t" style="left:363.40px;top:401.00px;font-size:7.4px;transform:scaleX(0.834);color:#222;font-weight:bold;">Top Overlay</div>
<div class="a" style="left:400.10px;top:399.00px;width:0.70px;height:11.00px;background:#d8d8d8"></div>
<div class="a" style="left:406.00px;top:402.00px;width:5.30px;height:5.00px;background:#808000;border:0.5px solid #444"></div>
<div class="t" style="left:413.60px;top:401.00px;font-size:7.4px;transform:scaleX(0.918);color:#222;">Bottom Overlay</div>
<div class="a" style="left:461.70px;top:399.00px;width:0.70px;height:11.00px;background:#d8d8d8"></div>
<div class="a" style="left:466.40px;top:402.00px;width:5.30px;height:5.00px;background:#808080;border:0.5px solid #444"></div>
<div class="t" style="left:474.90px;top:401.00px;font-size:7.4px;transform:scaleX(0.832);color:#222;">Top Paste</div>
<div class="a" style="left:505.70px;top:399.00px;width:0.70px;height:11.00px;background:#d8d8d8"></div>
<div class="a" style="left:509.80px;top:402.00px;width:5.30px;height:5.00px;background:#800000;border:0.5px solid #444"></div>
<div class="t" style="left:517.40px;top:401.00px;font-size:7.4px;transform:scaleX(0.921);color:#222;">Bottom Paste</div>
<div class="a" style="left:560.60px;top:399.00px;width:0.70px;height:11.00px;background:#d8d8d8"></div>
<div class="a" style="left:564.30px;top:402.00px;width:5.30px;height:5.00px;background:#800080;border:0.5px solid #444"></div>
<div class="t" style="left:572.80px;top:401.00px;font-size:7.4px;transform:scaleX(0.892);color:#222;">Top Solder</div>
<div class="a" style="left:606.50px;top:399.00px;width:0.70px;height:11.00px;background:#d8d8d8"></div>
<div class="a" style="left:610.80px;top:402.00px;width:5.30px;height:5.00px;background:#ff00ff;border:0.5px solid #444"></div>
<div class="t" style="left:619.40px;top:401.00px;font-size:7.4px;transform:scaleX(0.924);color:#222;">Bottom Solder</div>
<div class="a" style="left:664.00px;top:399.00px;width:0.70px;height:11.00px;background:#d8d8d8"></div>
<div class="a" style="left:668.70px;top:402.00px;width:5.30px;height:5.00px;background:#800000;border:0.5px solid #444"></div>
<div class="t" style="left:677.00px;top:401.00px;font-size:7.4px;transform:scaleX(0.991);color:#222;">Dr</div>
<svg class="a" style="left:0;top:0" width="800" height="426" viewBox="0 0 800 426"><circle cx="687.5" cy="402.3" r="1.3" fill="none" stroke="#d8b020" stroke-width="0.8"/><circle cx="687.5" cy="406.2" r="1.3" fill="none" stroke="#d8b020" stroke-width="0.8"/>
<path d="M690 401.5L693 404.2L690 407Z" fill="#3a7ad0"/><path d="M694.5 401.8H700L697.8 404.5V407.5L696.6 406.8V404.5Z" fill="none" stroke="#3a7ad0" stroke-width="0.7"/></svg>
<div class="a" style="left:704.00px;top:398.50px;width:19.00px;height:11.20px;background:#f6f6f6"></div>
<div class="a" style="left:723.00px;top:399.00px;width:0.80px;height:10.50px;background:#dadada"></div>
<div class="t" style="left:706.50px;top:402.00px;font-size:7.6px;transform:scaleX(0.810);color:#6a6a6a;-webkit-text-stroke:0.1px currentColor">Snap</div>
<div class="a" style="left:724.00px;top:398.50px;width:36.60px;height:11.20px;background:#f6f6f6"></div>
<div class="a" style="left:760.60px;top:399.00px;width:0.80px;height:10.50px;background:#dadada"></div>
<div class="t" style="left:726.50px;top:402.00px;font-size:7.6px;transform:scaleX(0.829);color:#6a6a6a;-webkit-text-stroke:0.1px currentColor">Mask Level</div>
<div class="a" style="left:761.60px;top:398.50px;width:19.20px;height:11.20px;background:#f6f6f6"></div>
<div class="a" style="left:780.80px;top:399.00px;width:0.80px;height:10.50px;background:#dadada"></div>
<div class="t" style="left:764.00px;top:402.00px;font-size:7.6px;transform:scaleX(0.819);color:#6a6a6a;-webkit-text-stroke:0.1px currentColor">Clear</div>
<div class="a" style="left:0;top:410.3px;width:800px;height:2.6px;background:linear-gradient(#b8b8b8,#dcdcdc)"></div>
<div class="a" style="left:782.30px;top:398.00px;width:1.30px;height:12.50px;background:#a8a8a8"></div>
<div class="a" style="left:0.00px;top:412.90px;width:800.00px;height:13.10px;background:#f0f0f0"></div>
<div class="t" style="left:2.70px;top:416.00px;font-size:7.8px;transform:scaleX(0.793);color:#222;">X:-2.8mm Y:1.6mm</div>
<div class="t" style="left:63.00px;top:416.00px;font-size:7.8px;transform:scaleX(0.834);color:#222;">Grid: 0.1mm</div>
<div class="t" style="left:110.80px;top:416.00px;font-size:7.8px;transform:scaleX(0.869);color:#222;">(Hotspot Snap)</div>
<div class="a" style="left:203.50px;top:414.00px;width:0.80px;height:12.00px;background:#c4c4c4"></div>
<div class="a" style="left:406.90px;top:414.00px;width:0.80px;height:12.00px;background:#c4c4c4"></div>
<div class="a" style="left:594.40px;top:415.00px;width:28.90px;height:11.00px;background:#f8f8f8;border:1px solid #e2e2e2"></div>
<div class="t" style="left:598.19px;top:417.00px;font-size:7.8px;transform:scaleX(0.820);color:#3a3a3a;-webkit-text-stroke:0.1px currentColor">System</div>
<div class="a" style="left:598.19px;top:423.10px;width:4.26px;height:0.70px;background:#444"></div>
<div class="a" style="left:624.30px;top:415.00px;width:57.20px;height:11.00px;background:#f8f8f8;border:1px solid #e2e2e2"></div>
<div class="t" style="left:629.26px;top:417.00px;font-size:7.8px;transform:scaleX(0.820);color:#3a3a3a;-webkit-text-stroke:0.1px currentColor">Design Compiler</div>
<div class="a" style="left:629.26px;top:423.10px;width:4.62px;height:0.70px;background:#444"></div>
<div class="a" style="left:682.50px;top:415.00px;width:44.00px;height:11.00px;background:#f8f8f8;border:1px solid #e2e2e2"></div>
<div class="t" style="left:687.79px;top:417.00px;font-size:7.8px;transform:scaleX(0.820);color:#3a3a3a;-webkit-text-stroke:0.1px currentColor">Instruments</div>
<div class="a" style="left:687.79px;top:423.10px;width:1.78px;height:0.70px;background:#444"></div>
<div class="a" style="left:727.30px;top:415.00px;width:30.30px;height:11.00px;background:#f8f8f8;border:1px solid #e2e2e2"></div>
<div class="t" style="left:728.94px;top:417.00px;font-size:7.8px;transform:scaleX(0.820);color:#3a3a3a;-webkit-text-stroke:0.1px currentColor">Shortcuts</div>
<div class="a" style="left:728.94px;top:423.10px;width:4.26px;height:0.70px;background:#444"></div>
<div class="a" style="left:758.60px;top:415.00px;width:25.20px;height:11.00px;background:#f8f8f8;border:1px solid #e2e2e2"></div>
<div class="t" style="left:764.62px;top:417.00px;font-size:7.8px;transform:scaleX(0.820);color:#3a3a3a;-webkit-text-stroke:0.1px currentColor">PCB</div>
<div class="a" style="left:764.62px;top:423.10px;width:4.26px;height:0.70px;background:#444"></div>
<div class="a" style="left:787.00px;top:415.00px;width:11.00px;height:11.00px;background:#f8f8f8;border:1px solid #e2e2e2"></div>
<div class="t" style="left:787.88px;top:417.00px;font-size:7.8px;transform:scaleX(0.820);color:#3a3a3a;-webkit-text-stroke:0.1px currentColor">&gt; &gt;</div>
</body></html>
